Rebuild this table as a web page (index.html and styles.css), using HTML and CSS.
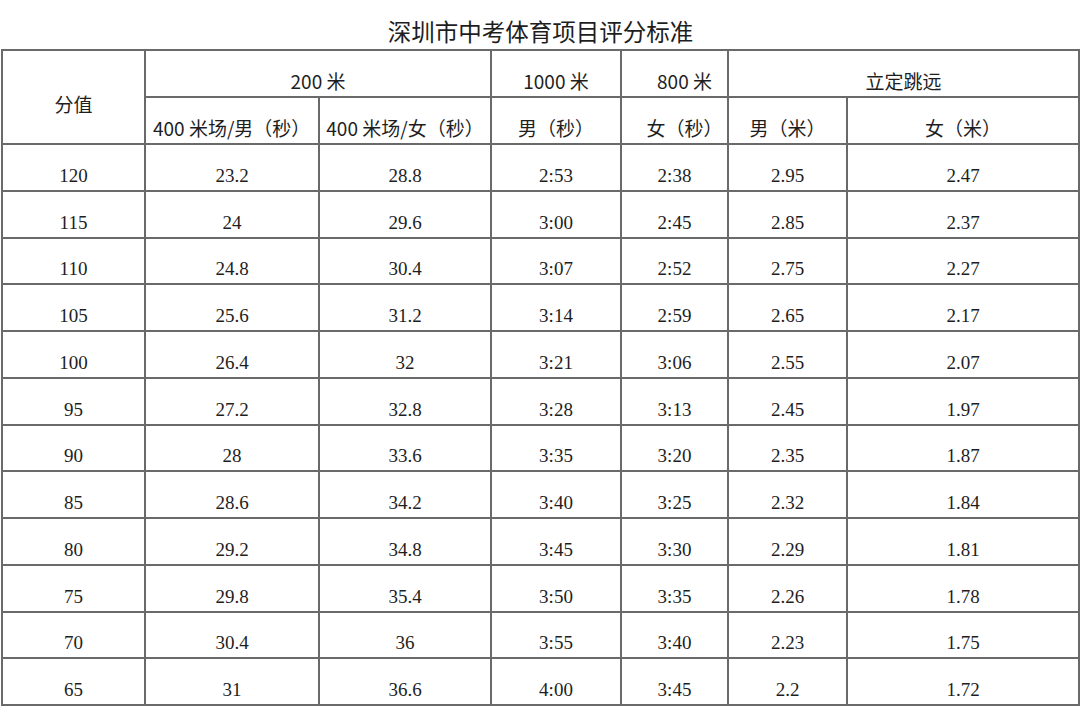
FILE: index.html
```
<!DOCTYPE html>
<html lang="zh-CN">
<head>
<meta charset="utf-8">
<title>深圳市中考体育项目评分标准</title>
<link rel="stylesheet" href="styles.css">
</head>
<body>
<div class="page">
  <h1 class="title">深圳市中考体育项目评分标准</h1>
  <table class="score">
    <colgroup>
      <col class="c1"><col class="c2"><col class="c3"><col class="c4"><col class="c5"><col class="c6"><col class="c7">
    </colgroup>
    <thead>
      <tr class="h1">
        <th rowspan="2" class="fen">分值</th>
        <th colspan="2">200 米</th>
        <th>1000 米</th>
        <th class="r800">800 米</th>
        <th colspan="2">立定跳远</th>
      </tr>
      <tr class="h2">
        <th class="m400">400 米场/男（秒）</th>
        <th>400 米场/女（秒）</th>
        <th>男（秒）</th>
        <th class="r800">女（秒）</th>
        <th>男（米）</th>
        <th>女（米）</th>
      </tr>
    </thead>
    <tbody>
      <tr><td>120</td><td>23.2</td><td>28.8</td><td>2:53</td><td>2:38</td><td>2.95</td><td>2.47</td></tr>
      <tr><td>115</td><td>24</td><td>29.6</td><td>3:00</td><td>2:45</td><td>2.85</td><td>2.37</td></tr>
      <tr><td>110</td><td>24.8</td><td>30.4</td><td>3:07</td><td>2:52</td><td>2.75</td><td>2.27</td></tr>
      <tr><td>105</td><td>25.6</td><td>31.2</td><td>3:14</td><td>2:59</td><td>2.65</td><td>2.17</td></tr>
      <tr><td>100</td><td>26.4</td><td>32</td><td>3:21</td><td>3:06</td><td>2.55</td><td>2.07</td></tr>
      <tr><td>95</td><td>27.2</td><td>32.8</td><td>3:28</td><td>3:13</td><td>2.45</td><td>1.97</td></tr>
      <tr><td>90</td><td>28</td><td>33.6</td><td>3:35</td><td>3:20</td><td>2.35</td><td>1.87</td></tr>
      <tr><td>85</td><td>28.6</td><td>34.2</td><td>3:40</td><td>3:25</td><td>2.32</td><td>1.84</td></tr>
      <tr><td>80</td><td>29.2</td><td>34.8</td><td>3:45</td><td>3:30</td><td>2.29</td><td>1.81</td></tr>
      <tr><td>75</td><td>29.8</td><td>35.4</td><td>3:50</td><td>3:35</td><td>2.26</td><td>1.78</td></tr>
      <tr><td>70</td><td>30.4</td><td>36</td><td>3:55</td><td>3:40</td><td>2.23</td><td>1.75</td></tr>
      <tr><td>65</td><td>31</td><td>36.6</td><td>4:00</td><td>3:45</td><td>2.2</td><td>1.72</td></tr>
    </tbody>
  </table>
</div>
</body>
</html>
```
FILE: styles.css
```
html, body {
  margin: 0;
  padding: 0;
  background: #ffffff;
}
.page {
  width: 1080px;
  height: 706px;
  overflow: hidden;
  padding-left: 1px;
  box-sizing: border-box;
  color: #1e1e1e;
}
.title {
  margin: 0;
  height: 49px;
  box-sizing: border-box;
  padding-top: 18px;
  font-family: "Noto Sans CJK SC", "Noto Sans", sans-serif;
  font-weight: normal;
  font-size: 23.5px;
  line-height: 26px;
  text-align: center;
}
.score {
  border-collapse: collapse;
  table-layout: fixed;
  width: 1079px;
}
.c1 { width: 143px; }
.c2 { width: 174px; }
.c3 { width: 172px; }
.c4 { width: 130px; }
.c5 { width: 107px; }
.c6 { width: 119px; }
.c7 { width: 232px; }
.score th,
.score td {
  border: 2px solid #6a6a6a;
  padding: 0 0 4px 0;
  text-align: center;
  vertical-align: bottom;
  white-space: nowrap;
  overflow: visible;
}
.score th {
  font-family: "Noto Sans CJK SC", "Noto Sans", sans-serif;
  font-weight: normal;
  font-size: 19px;
  line-height: 22px;
  height: 47px;
  box-sizing: border-box;
}
.score th.fen {
  vertical-align: middle;
  padding: 14px 0 0 0;
}
.score th.m400 {
  text-align: left;
  padding-left: 7px;
}
.score th.r800 {
  padding-left: 20px;
}
.score td {
  font-family: "Liberation Serif", "Times New Roman", serif;
  font-size: 19px;
  line-height: 20px;
  height: 46.75px;
  box-sizing: border-box;
  padding-bottom: 4px;
}
```
